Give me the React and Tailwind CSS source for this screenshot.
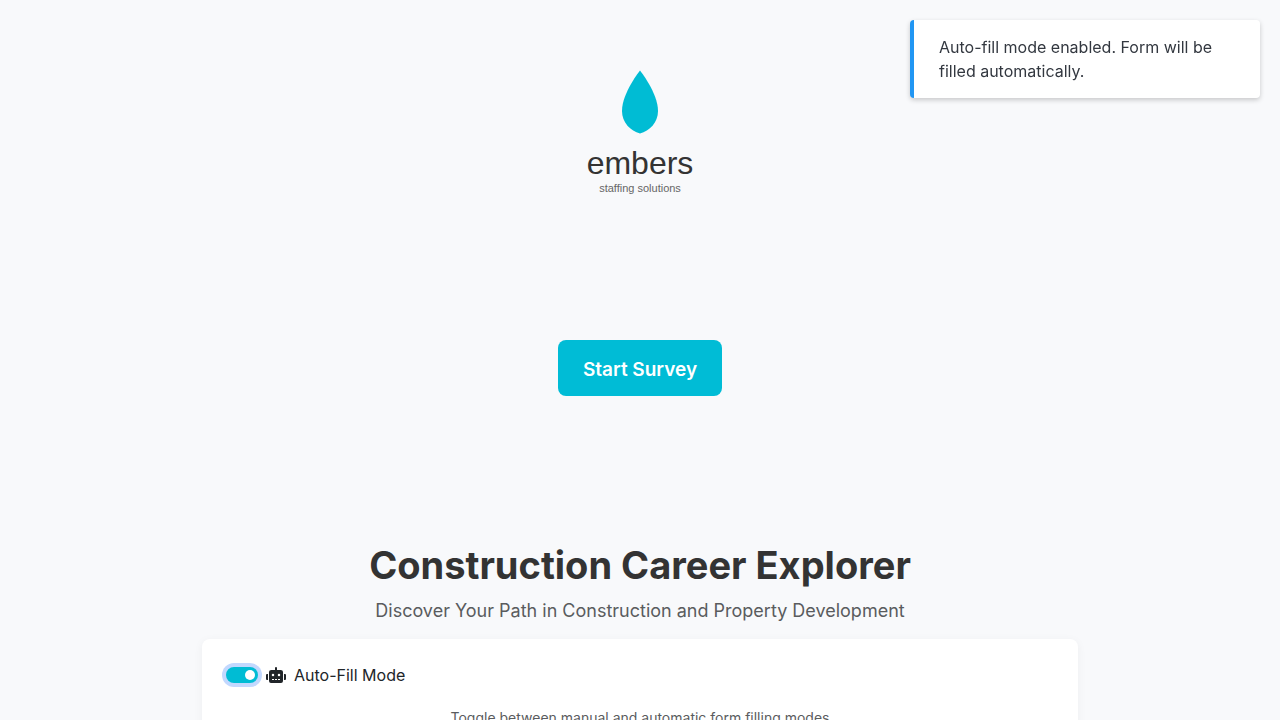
import { useState } from "react";
import { FaRobot } from "react-icons/fa";

function Logo() {
  return (
    <svg
      viewBox="0 0 200 150"
      className="h-[150px] w-[200px]"
      role="img"
      aria-label="embers staffing solutions"
    >
      <path
        d="M100 10.500C100 10.500 82 33 82 51C82 62.500 90.500 71 100 73.500C109.500 71 118 62.500 118 51C118 33 100 10.500 100 10.500Z"
        fill="#00bcd4"
      />
      <text
        x="100"
        y="114"
        textAnchor="middle"
        fill="#333333"
        className="font-['Liberation_Sans',Arial,sans-serif] text-[32px]"
      >
        embers
      </text>
      <text
        x="100"
        y="132"
        textAnchor="middle"
        fill="#666666"
        className="font-['Liberation_Sans',Arial,sans-serif] text-[11px]"
      >
        staffing solutions
      </text>
    </svg>
  );
}

function Toast({ children }) {
  return (
    <div
      role="status"
      className="fixed top-5 right-5 z-10 w-[350px] max-w-full rounded border-l-4 border-[#2196f3] bg-white px-[25px] py-[15px] text-base leading-6 text-[#333840] shadow-[0_2px_5px_rgba(0,0,0,0.2)]"
    >
      {children}
    </div>
  );
}

export default function App() {
  const [autoFill, setAutoFill] = useState(true);

  return (
    <div className="min-h-screen bg-[#f8f9fb] font-[Inter,sans-serif] text-[#212529]">
      {autoFill && (
        <Toast>Auto-fill mode enabled. Form will be filled automatically.</Toast>
      )}

      <header className="flex flex-col items-center pt-[60px]">
        <Logo />
        <button
          type="button"
          className="mt-[130px] rounded-lg bg-[#00bcd6] px-[25px] pt-4 pb-3 text-[19px] leading-7 font-semibold text-white"
        >
          Start Survey
        </button>
      </header>

      <main className="mx-auto max-w-[900px] px-3 pt-[145px]">
        <h1 className="text-center text-[38px] leading-12 font-bold text-[#333333]">
          Construction Career Explorer
        </h1>
        <p className="mt-2 text-center text-lg leading-[27px] text-[#5a5c5e]">
          Discover Your Path in Construction and Property Development
        </p>

        <section className="mt-[15px] rounded-lg bg-white p-6 shadow-[0_2px_10px_rgba(0,0,0,0.05)]">
          <div className="flex items-center">
            <input
              id="auto-fill"
              type="checkbox"
              role="switch"
              checked={autoFill}
              onChange={(e) => setAutoFill(e.target.checked)}
              className="h-4 w-8 cursor-pointer appearance-none rounded-full bg-gray-300 ring-4 ring-[#c2d8fe] before:m-[3px] before:block before:size-2.5 before:rounded-full before:bg-white checked:bg-[#00bcd4] checked:before:ml-[19px]"
            />
            <label
              htmlFor="auto-fill"
              className="ml-2 flex items-center gap-2 text-base leading-6"
            >
              <FaRobot className="h-4 w-5" />
              Auto-Fill Mode
            </label>
          </div>
          <p className="mt-5 text-center text-sm leading-[21px] text-[#5a5c5e]">
            Toggle between manual and automatic form filling modes
          </p>
        </section>
      </main>
    </div>
  );
}
